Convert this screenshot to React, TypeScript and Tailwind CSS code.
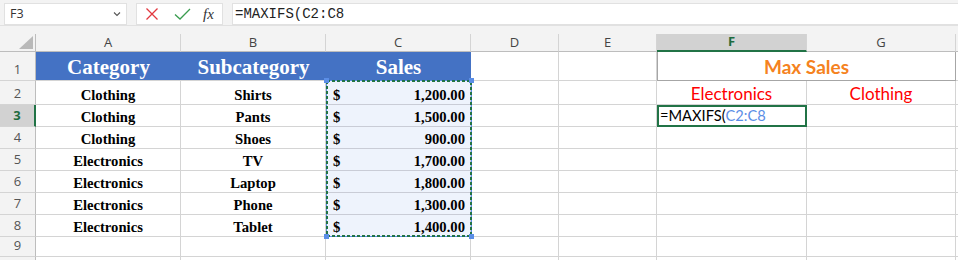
import React from 'react';

const COLS = ['A', 'B', 'C', 'D', 'E', 'F', 'G'];

const rows: [string, string, string][] = [
  ['Clothing', 'Shirts', '1,200.00'],
  ['Clothing', 'Pants', '1,500.00'],
  ['Clothing', 'Shoes', '900.00'],
  ['Electronics', 'TV', '1,700.00'],
  ['Electronics', 'Laptop', '1,800.00'],
  ['Electronics', 'Phone', '1,300.00'],
  ['Electronics', 'Tablet', '1,400.00'],
];

const uiFont = { fontFamily: '"Open Sans", "Noto Sans", sans-serif' };
const serif = { fontFamily: '"Liberation Serif", serif' };
const calibri = { fontFamily: 'Lato, "Open Sans", sans-serif' };

const FormulaBar: React.FC = () => (
  <div className="flex h-[26px] items-start gap-[9px] bg-[#f3f3f3] pl-[4px] pt-[3px] border-b border-[#e1e1e1]">
    <div className="flex h-[22px] w-[123px] items-center justify-between border border-[#e1e1e1] bg-white pl-[5px] pr-[5px] text-[12.5px] text-[#333]" style={uiFont}>
      <span>F3</span>
      <svg width="8" height="6" viewBox="0 0 8 6">
        <path d="M1 1.5 L4 4.5 L7 1.5" fill="none" stroke="#555" strokeWidth="1.1" />
      </svg>
    </div>
    <div className="flex h-[22px] w-[87px] items-center border border-[#e1e1e1] bg-white">
      <svg className="ml-[8px]" width="14" height="14" viewBox="0 0 14 14">
        <path d="M1.5 1.5 L12.5 12.5 M12.5 1.5 L1.5 12.5" stroke="#e2383f" strokeWidth="1.3" fill="none" />
      </svg>
      <svg className="ml-[15px]" width="17" height="14" viewBox="0 0 17 14">
        <path d="M1 7.5 L6 12 L16 2" stroke="#3a9c4f" strokeWidth="1.3" fill="none" />
      </svg>
      <span className="ml-[12px] text-[15px] italic text-[#333]" style={serif}>fx</span>
    </div>
    <div className="flex h-[22px] flex-1 items-center border border-[#e1e1e1] border-r-0 bg-white pl-[2px] text-[14px] text-[#222]" style={{ fontFamily: '"Liberation Mono", "DejaVu Sans Mono", monospace' }}>
      =MAXIFS(C2:C8
    </div>
  </div>
);

const HeaderCell: React.FC<{ label: string; active?: boolean }> = ({ label, active }) => (
  <div
    className={`flex items-center justify-center border-r border-[#d4d4d4] text-[13px] ${
      active ? 'bg-[#d2d2d2] font-bold text-[#1e6b3e] border-b-2 border-b-[#217346]' : 'bg-[#f3f3f3] text-[#444] border-b border-b-[#bdbdbd]'
    }`}
    style={uiFont}
  >
    {label}
  </div>
);

const RowHead: React.FC<{ n?: number; active?: boolean }> = ({ n, active }) => (
  <div
    className={`flex items-end justify-center pb-[1px] border-b border-[#d4d4d4] text-[13px] ${
      active ? 'bg-[#d2d2d2] font-bold text-[#1e6b3e] border-r-2 border-r-[#217346]' : 'bg-[#f3f3f3] text-[#555] border-r border-r-[#bdbdbd]'
    }`}
    style={uiFont}
  >
    {n}
  </div>
);

const Cell: React.FC<{ children?: React.ReactNode; className?: string; style?: React.CSSProperties }> = ({ children, className = '', style }) => (
  <div className={`flex items-end border-r border-b border-[#d4d4d4] overflow-hidden whitespace-nowrap ${className}`} style={style}>
    {children}
  </div>
);

const App: React.FC = () => {
  return (
    <div className="h-[260px] w-[958px] overflow-hidden bg-[#f3f3f3]">
      <FormulaBar />
      <div className="h-[8px] bg-[#f3f3f3]" />
      <div className="relative grid grid-cols-[36px_145px_145px_145px_88px_98px_150px_149px_1fr] grid-rows-[18px_29px_24px_22px_22px_22px_22px_22px_22px_20px_22px] bg-white">
        {/* column headers */}
        <div className="relative bg-[#f3f3f3] border-r border-b border-[#bdbdbd]">
          <svg className="absolute right-[2px] bottom-[2px]" width="14" height="13" viewBox="0 0 14 13">
            <path d="M14 0 L14 13 L0 13 Z" fill="#b9b9b9" />
          </svg>
        </div>
        {COLS.map(c => (
          <HeaderCell key={c} label={c} active={c === 'F'} />
        ))}
        <div className="bg-[#f3f3f3] border-b border-[#bdbdbd]" />

        {/* row 1 */}
        <RowHead n={1} />
        <Cell className="col-span-3 !border-r-0 bg-[#4472c4]">
          <div className="grid w-full grid-cols-3 text-[21px] font-bold leading-[26px] text-white" style={serif}>
            <span className="text-center">Category</span>
            <span className="text-center">Subcategory</span>
            <span className="text-center">Sales</span>
          </div>
        </Cell>
        <Cell />
        <Cell />
        <div className="col-span-2 flex items-center justify-center border-x border-b border-[#a6a6a6] bg-white pt-[2px] text-[19px] font-bold text-[#f58220]" style={calibri}>
          Max Sales
        </div>
        <div className="border-b border-[#d4d4d4]" />

        {/* row 2 .. 8 */}
        {rows.map((r, i) => {
          const n = i + 2;
          return (
            <React.Fragment key={n}>
              <RowHead n={n} active={n === 3} />
              <Cell className="justify-center text-[14.67px] font-bold leading-[18px] text-black" style={serif}>{r[0]}</Cell>
              <Cell className="justify-center text-[14.67px] font-bold leading-[18px] text-black" style={serif}>{r[1]}</Cell>
              <Cell className="justify-between bg-[#eef3fc] !border-[#c9ccd6] pl-[7px] pr-[5px] text-[14.67px] font-bold leading-[18px] text-black" style={serif}>
                <span>$</span>
                <span>{r[2]}</span>
              </Cell>
              <Cell />
              <Cell />
              {n === 2 ? (
                <>
                  <Cell className="justify-center text-[17px] leading-[20px] text-[#ff0000]" style={calibri}>Electronics</Cell>
                  <Cell className="justify-center text-[17px] leading-[20px] text-[#ff0000]" style={calibri}>Clothing</Cell>
                </>
              ) : n === 3 ? (
                <>
                  <div className="flex items-end border-2 border-[#217346] bg-white pl-[1px] text-[14.67px] leading-[18px] text-black" style={calibri}>
                    =MAXIFS(<span className="text-[#5b8ee6]">C2:C8</span>
                  </div>
                  <Cell />
                </>
              ) : (
                <>
                  <Cell />
                  <Cell />
                </>
              )}
              <div className="border-b border-[#d4d4d4]" />
            </React.Fragment>
          );
        })}

        {/* row 9, and the edge of row 10 */}
        {[9, 10].map(n => (
          <React.Fragment key={n}>
            <RowHead n={n === 9 ? n : undefined} />
            {COLS.map(c => (
              <Cell key={c} />
            ))}
            <div className="border-b border-[#d4d4d4]" />
          </React.Fragment>
        ))}

        {/* copy range C2:C8 overlay */}
        <div className="pointer-events-none absolute left-[326px] top-[46px] h-[157px] w-[146px] border border-[#5b8ee6]">
          <svg className="absolute -left-px -top-px" width="146" height="157" viewBox="0 0 146 157">
            <rect x="1" y="1" width="144" height="155" fill="none" stroke="#217346" strokeWidth="2" strokeDasharray="3 2" />
          </svg>
          <div className="absolute -left-[3px] -top-[3px] h-[5px] w-[5px] bg-[#5b8ee6]" />
          <div className="absolute -right-[3px] -top-[3px] h-[5px] w-[5px] bg-[#5b8ee6]" />
          <div className="absolute -left-[3px] -bottom-[3px] h-[5px] w-[5px] bg-[#5b8ee6]" />
          <div className="absolute -right-[3px] -bottom-[3px] h-[5px] w-[5px] bg-[#5b8ee6]" />
        </div>
      </div>
    </div>
  );
};

export default App;
